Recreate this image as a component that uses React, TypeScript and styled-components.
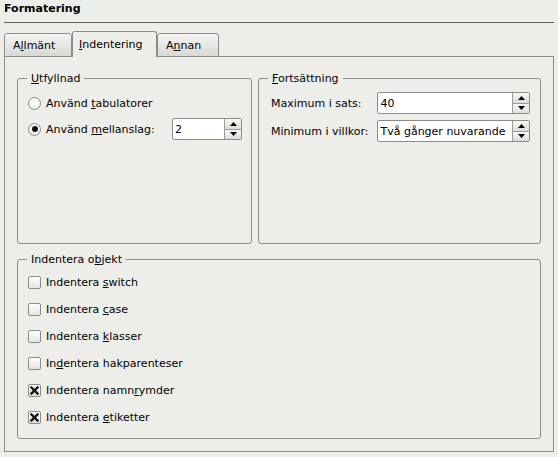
import React from "react";
import styled, { createGlobalStyle } from "styled-components";

const BG = "#edeeea";
const LINE = "#8b8b87";

const GlobalStyle = createGlobalStyle`
  html, body { margin: 0; padding: 0; background: ${BG}; }
  body {
    font-family: "DejaVu Sans", "Noto Sans", sans-serif;
    font-size: 11px;
    color: #000;
  }
`;

const Page = styled.div`
  box-sizing: border-box;
  width: 558px;
  height: 457px;
  padding: 2px 4px 0 4px;
  display: flex;
  flex-direction: column;
  background: ${BG};
`;

const Title = styled.div`
  font-weight: bold;
  font-size: 11px;
  line-height: 13px;
`;

const Separator = styled.div`
  margin-top: 7px;
  height: 1px;
  background: #5e5e5c;
`;

const TabBar = styled.div`
  margin-top: 8px;
  margin-bottom: -1px;
  display: flex;
  align-items: flex-end;
  position: relative;
  z-index: 1;
`;

const Tab = styled.div<{ $active?: boolean; $width: number }>`
  box-sizing: border-box;
  width: ${(p) => p.$width}px;
  height: ${(p) => (p.$active ? 26 : 24)}px;
  padding-left: ${(p) => (p.$active ? 6 : 8)}px;
  display: flex;
  align-items: center;
  line-height: 13px;
  border: 1px solid ${LINE};
  border-bottom: ${(p) => (p.$active ? "none" : `1px solid ${LINE}`)};
  border-radius: 3px 3px 0 0;
  background: ${(p) => (p.$active ? BG : "linear-gradient(#f5f5f3, #d8d8d4)")};
`;

const Frame = styled.div`
  box-sizing: border-box;
  height: 396px;
  border: 1px solid ${LINE};
  padding: 15px 12px 12px 12px;
  display: flex;
  flex-direction: column;
  gap: 9px;
`;

const TopRow = styled.div`
  display: grid;
  grid-template-columns: 235px 1fr;
  column-gap: 6px;
  height: 172px;
`;

const Group = styled.fieldset<{ $grow?: boolean }>`
  box-sizing: border-box;
  margin: 0;
  padding: 0;
  min-width: 0;
  border: 1px solid ${LINE};
  border-radius: 3px;
  ${(p) => (p.$grow ? "flex: 1;" : "")}
`;

const Legend = styled.legend`
  margin-left: 9px;
  padding: 0 4px;
  font-size: 11px;
  line-height: 13px;
`;

const Key = styled.u`
  text-decoration: underline;
`;

const FillBody = styled.div`
  padding: 7px 9px 0 10px;
  display: flex;
  flex-direction: column;
  gap: 4px;
`;

const OptionRow = styled.div<{ $height: number }>`
  display: flex;
  align-items: center;
  height: ${(p) => p.$height}px;
  line-height: 13px;
  white-space: nowrap;
`;

const Radio = styled.span<{ $checked?: boolean }>`
  box-sizing: border-box;
  width: 13px;
  height: 13px;
  margin-right: 5px;
  border-radius: 50%;
  border: 1px solid #8a8a86;
  background: radial-gradient(circle at 50% 35%, #ffffff 30%, #e2e2de 100%);
  display: flex;
  align-items: center;
  justify-content: center;
  flex: none;
  &::after {
    content: "";
    display: ${(p) => (p.$checked ? "block" : "none")};
    width: 6px;
    height: 6px;
    border-radius: 50%;
    background: #111;
  }
`;

const Check = styled.span`
  box-sizing: border-box;
  width: 13px;
  height: 13px;
  margin-right: 5px;
  border-radius: 2px;
  border: 1px solid #8a8a86;
  background: linear-gradient(#ffffff, #e4e4e0);
  display: flex;
  align-items: center;
  justify-content: center;
  flex: none;
`;

const ContBody = styled.div`
  padding: 7px 10px 0 12px;
  display: grid;
  grid-template-columns: auto 1fr;
  grid-auto-rows: 22px;
  column-gap: 9px;
  row-gap: 6px;
  align-items: center;
  white-space: nowrap;
`;

const Spin = styled.div<{ $width?: number }>`
  box-sizing: border-box;
  height: 22px;
  ${(p) => (p.$width ? `width: ${p.$width}px; margin-left: auto;` : "")}
  display: flex;
  border: 1px solid #8a8a86;
  border-radius: 2px;
  background: #fff;
  overflow: hidden;
`;

const SpinValue = styled.div`
  flex: 1;
  min-width: 0;
  padding-left: 2px;
  display: flex;
  align-items: center;
  white-space: nowrap;
  overflow: hidden;
  font-size: 11px;
`;

const SpinButtons = styled.div`
  width: 16px;
  flex: none;
  display: flex;
  flex-direction: column;
  border-left: 1px solid #9c9c98;
`;

const SpinButton = styled.div`
  flex: 1;
  display: flex;
  align-items: center;
  justify-content: center;
  background: linear-gradient(#f7f7f5, #dcdcd8);
  & + & {
    border-top: 1px solid #9c9c98;
  }
`;

const ObjBody = styled.div`
  padding: 6px 10px 0 10px;
  display: flex;
  flex-direction: column;
  gap: 7px;
`;

const Arrow = ({ up }: { up?: boolean }) => (
  <svg width="7" height="4" viewBox="0 0 7 4">
    <polygon points={up ? "3.5,0 7,4 0,4" : "0,0 7,0 3.5,4"} fill="#000" />
  </svg>
);

const SpinBox = ({ value, width }: { value: string; width?: number }) => (
  <Spin $width={width}>
    <SpinValue>{value}</SpinValue>
    <SpinButtons>
      <SpinButton>
        <Arrow up />
      </SpinButton>
      <SpinButton>
        <Arrow />
      </SpinButton>
    </SpinButtons>
  </Spin>
);

const CheckItem = ({
  checked,
  children,
}: {
  checked?: boolean;
  children: React.ReactNode;
}) => (
  <OptionRow $height={20}>
    <Check>
      {checked && (
        <svg width="9" height="9" viewBox="0 0 9 9">
          <path d="M1.5 1.5 L7.5 7.5 M7.5 1.5 L1.5 7.5" stroke="#111" strokeWidth="2.4" strokeLinecap="square" />
        </svg>
      )}
    </Check>
    <span>{children}</span>
  </OptionRow>
);

export default function App() {
  return (
    <>
      <GlobalStyle />
      <Page>
        <Title>Formatering</Title>
        <Separator />
        <TabBar>
          <Tab $width={68}>
            A<Key>l</Key>lmänt
          </Tab>
          <Tab $width={85} $active>
            <Key>I</Key>ndentering
          </Tab>
          <Tab $width={62}>
            A<Key>n</Key>nan
          </Tab>
        </TabBar>
        <Frame>
          <TopRow>
            <Group>
              <Legend>
                <Key>U</Key>tfyllnad
              </Legend>
              <FillBody>
                <OptionRow $height={22}>
                  <Radio />
                  <span>
                    Använd <Key>t</Key>abulatorer
                  </span>
                </OptionRow>
                <OptionRow $height={22}>
                  <Radio $checked />
                  <span>
                    Använd <Key>m</Key>ellanslag:
                  </span>
                  <SpinBox value="2" width={70} />
                </OptionRow>
              </FillBody>
            </Group>
            <Group>
              <Legend>
                <Key>F</Key>ortsättning
              </Legend>
              <ContBody>
                <span>Maximum i sats:</span>
                <SpinBox value="40" />
                <span>Minimum i villkor:</span>
                <SpinBox value="Två gånger nuvarande" />
              </ContBody>
            </Group>
          </TopRow>
          <Group $grow>
            <Legend>
              Indentera o<Key>b</Key>jekt
            </Legend>
            <ObjBody>
              <CheckItem>
                Indentera <Key>s</Key>witch
              </CheckItem>
              <CheckItem>
                Indentera <Key>c</Key>ase
              </CheckItem>
              <CheckItem>
                Indentera <Key>k</Key>lasser
              </CheckItem>
              <CheckItem>
                In<Key>d</Key>entera hakparenteser
              </CheckItem>
              <CheckItem checked>
                Indentera namn<Key>r</Key>ymder
              </CheckItem>
              <CheckItem checked>
                Indentera <Key>e</Key>tiketter
              </CheckItem>
            </ObjBody>
          </Group>
        </Frame>
      </Page>
    </>
  );
}
